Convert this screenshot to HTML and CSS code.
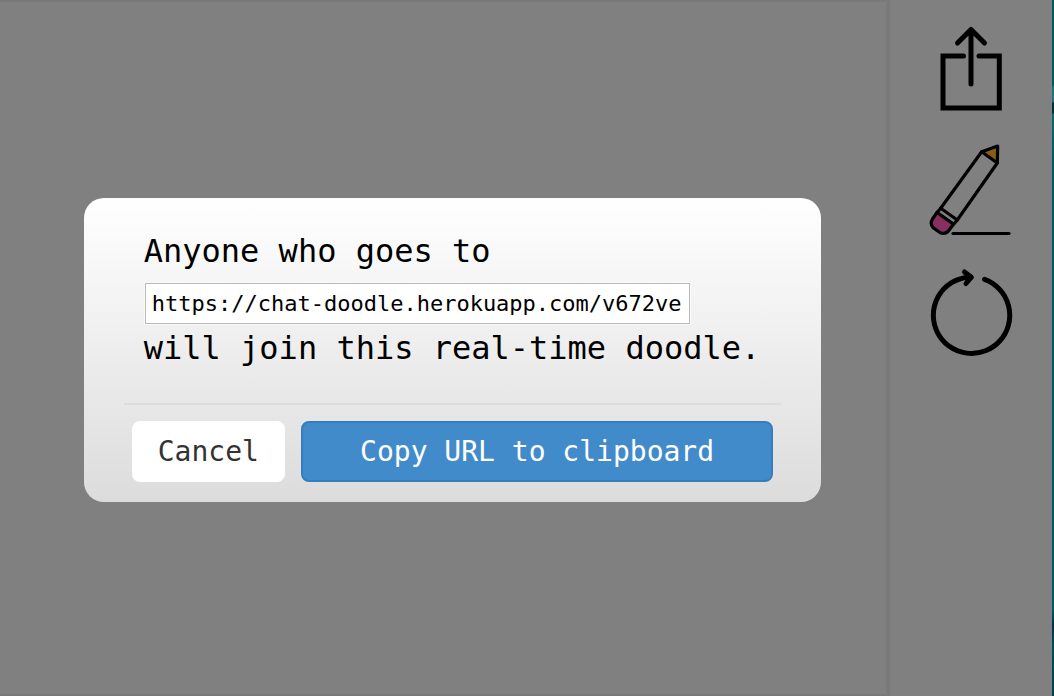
FILE: index.html
```html
<!DOCTYPE html>
<html lang="en">
<head>
<meta charset="utf-8">
<title>Chat Doodle</title>
<link rel="stylesheet" href="styles.css">
</head>
<body>
<div class="app">
  <main class="board"></main>
  <nav class="tools" aria-label="Drawing tools">
    <button class="tool" type="button" aria-label="Share">
      <svg width="84" height="88" viewBox="0 0 84 88" fill="none" stroke="#000" stroke-width="5" stroke-linecap="round">
        <path d="M42 59V5M28.500 18L42 4.500L55.500 18" stroke-linejoin="round"/>
        <path d="M34.500 31H14V83H70.300V31H50"/>
      </svg>
    </button>
    <button class="tool" type="button" aria-label="Pencil">
      <svg width="84" height="96" viewBox="0 0 84 96" fill="none" stroke="#000" stroke-width="3.200" stroke-linecap="round" stroke-linejoin="round">
        <path fill="#86600f" d="M68.700 4L52.700 9.700L68.300 21Z"/>
        <path d="M52.700 9.700L11.700 66.300L28.300 78L68.300 21"/>
        <path d="M11.700 66.300L8 70.500L24.500 82.300L28.300 78"/>
        <path fill="#86305f" d="M8 70.500L3.500 77Q.5 82 4.500 86L10.500 90.300Q15.500 93 19 89.500L24.500 82.300Z"/>
        <path d="M24 91.500H80"/>
      </svg>
    </button>
    <button class="tool" type="button" aria-label="Clear">
      <svg width="84" height="92" viewBox="0 0 84 92" fill="none" stroke="#000" stroke-width="5" stroke-linecap="round" stroke-linejoin="round">
        <path d="M55.500 12.300A38.200 38.200 0 1 1 39 10.200H42"/>
        <path fill="#000" d="M35.500 5L42.300 10.200L37 16.500"/>
      </svg>
    </button>
  </nav>
  <div class="edge"></div>
</div>
<div class="overlay">
  <form class="dialog" role="dialog" aria-label="Share this doodle">
    <div class="message">
      <label for="url">Anyone who goes to</label>
      <input class="url" id="url" type="text" readonly value="https://chat-doodle.herokuapp.com/v672ve">
      <p class="line">will join this real-time doodle.</p>
    </div>
    <div class="actions">
      <button class="btn" type="button">Cancel</button>
      <button class="btn btn-primary" type="button">Copy URL to clipboard</button>
    </div>
  </form>
</div>
</body>
</html>
```
FILE: styles.css
```css
* { box-sizing: border-box; }

body {
  margin: 0;
  background: #808080;
  color: #000;
  font-family: "DejaVu Sans Mono", monospace;
}

.app {
  display: flex;
  min-height: 100vh;
}

.board {
  flex: 1;
  border: solid #797979;
  border-width: 2px 4px 2px 0;
}

.tools {
  display: flex;
  flex-direction: column;
  align-items: center;
  gap: 29px;
  width: 162px;
  padding-top: 25px;
}

.tool {
  padding: 0;
  border: 0;
  background: none;
}

.tool svg { display: block; }

.edge {
  width: 2px;
  background: linear-gradient(#07555f 0, #07555f 84px, #23717a 88px, #23717a 102px, #022f3a 103px, #022f3a 113px, #106570 114px, #075463 160px, #075463 610px, #032f48 625px, #064a5f 645px, #053c55 100%);
}

.overlay {
  position: absolute;
  inset: 0;
  display: flex;
  align-items: center;
  justify-content: center;
  padding: 4px 149px 0 0;
}

.dialog {
  padding: 0 40px;
  border-radius: 20px;
  background: linear-gradient(#fff, #dcdcdc);
}

.message {
  display: flex;
  flex-direction: column;
  align-items: flex-start;
  padding: 35px 20px 36px;
  border-bottom: 2px solid #dcdcdc;
  font-size: 32px;
  line-height: 37px;
}

.url {
  width: 545px;
  height: 41px;
  margin: 13px 1px 6px;
  padding: 0 6px;
  border: 1px solid #b9b9b9;
  box-shadow: 0 0 0 1px #fafafa;
  background: #fff;
  color: #000;
  font: 22px "DejaVu Sans Mono", monospace;
}

.line {
  margin: 0;
  padding-right: 1px;
}

.actions {
  display: flex;
  gap: 16px;
  padding: 16px 8px 20px;
}

.btn {
  padding: 12px 24px;
  border: 2px solid #fff;
  border-radius: 8px;
  background: #fff;
  color: #333;
  font: 28px/33px "DejaVu Sans Mono", monospace;
}

.btn-primary {
  flex: 1;
  border-color: #357ebd;
  background: #428bca;
  color: #fff;
}
```
